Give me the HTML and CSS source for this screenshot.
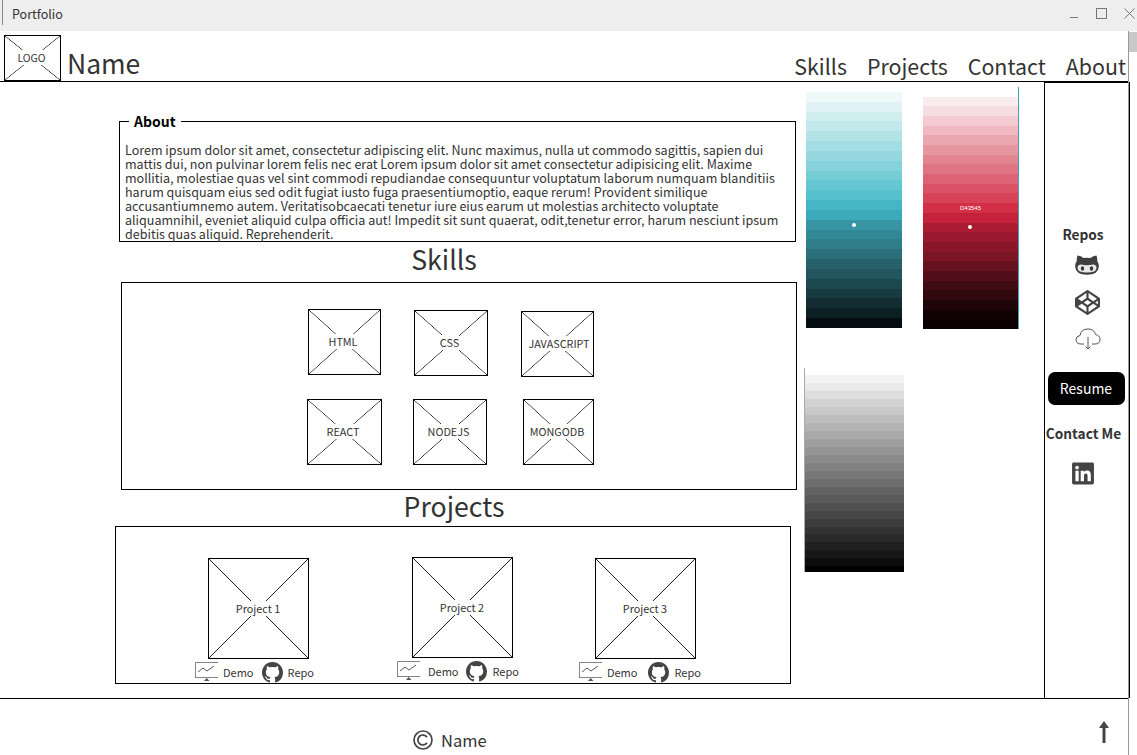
FILE: index.html
```html
<!DOCTYPE html>
<html>
<head>
    <meta charset="utf-8">
    <title>Portfolio</title>
    <link rel="stylesheet" href="styles.css">
</head>
<body>
    <div class="titlebar">
        <span class="window-title">Portfolio</span>
        <div class="window-controls">
            <svg width="9" height="9" viewBox="0 0 9 9"><path d="M0 8.5H8" stroke="#777" fill="none"/></svg>
            <svg width="11" height="11" viewBox="0 0 11 11"><rect x="0.5" y="0.5" width="10" height="10" stroke="#777" fill="none"/></svg>
            <svg width="11" height="11" viewBox="0 0 11 11"><path d="M0.5 0.5L10.5 10.5M10.5 0.5L0.5 10.5" stroke="#777" fill="none"/></svg>
        </div>
    </div>

    <div class="window">
        <div class="page">
            <header class="header">
                <div class="wire logo"><span>LOGO</span></div>
                <div class="name">Name</div>
                <nav class="nav">
                    <a>Skills</a>
                    <a>Projects</a>
                    <a>Contact</a>
                    <a>About</a>
                </nav>
            </header>

            <main class="main">
                <div class="content">
                    <fieldset class="about">
                        <legend>About</legend>
                        <p>Lorem ipsum dolor sit amet, consectetur adipiscing elit. Nunc maximus, nulla ut commodo sagittis, sapien dui<br>
                        mattis dui, non pulvinar lorem felis nec erat Lorem ipsum dolor sit amet consectetur adipisicing elit. Maxime<br>
                        mollitia, molestiae quas vel sint commodi repudiandae consequuntur voluptatum laborum numquam blanditiis<br>
                        harum quisquam eius sed odit fugiat iusto fuga praesentiumoptio, eaque rerum! Provident similique<br>
                        accusantiumnemo autem. Veritatisobcaecati tenetur iure eius earum ut molestias architecto voluptate<br>
                        aliquamnihil, eveniet aliquid culpa officia aut! Impedit sit sunt quaerat, odit,tenetur error, harum nesciunt ipsum<br>
                        debitis quas aliquid. Reprehenderit.</p>
                    </fieldset>

                    <h2 class="section-title skills-title">Skills</h2>
                    <section class="skills">
                        <div class="skill-row">
                            <div class="wire skill-html"><span>HTML</span></div>
                            <div class="wire skill-css"><span>CSS</span></div>
                            <div class="wire skill-js"><span>JAVASCRIPT</span></div>
                        </div>
                        <div class="skill-row skill-row-2">
                            <div class="wire skill-react"><span>REACT</span></div>
                            <div class="wire skill-node"><span>NODEJS</span></div>
                            <div class="wire skill-mongo"><span>MONGODB</span></div>
                        </div>
                    </section>

                    <h2 class="section-title projects-title">Projects</h2>
                    <section class="projects">
                        <div class="project project-1">
                            <div class="wire thumb"><span>Project 1</span></div>
                            <div class="project-links">
                                <svg class="demo-icon" viewBox="0 0 23 20"><use href="#monitor"/></svg>
                                <span class="demo-label">Demo</span>
                                <svg class="repo-icon" viewBox="0 0 16 16"><use href="#github"/></svg>
                                <span>Repo</span>
                            </div>
                        </div>
                        <div class="project project-2">
                            <div class="wire thumb"><span>Project 2</span></div>
                            <div class="project-links">
                                <svg class="demo-icon" viewBox="0 0 23 20"><use href="#monitor"/></svg>
                                <span class="demo-label">Demo</span>
                                <svg class="repo-icon" viewBox="0 0 16 16"><use href="#github"/></svg>
                                <span>Repo</span>
                            </div>
                        </div>
                        <div class="project project-3">
                            <div class="wire thumb"><span>Project 3</span></div>
                            <div class="project-links">
                                <svg class="demo-icon" viewBox="0 0 23 20"><use href="#monitor"/></svg>
                                <span class="demo-label">Demo</span>
                                <svg class="repo-icon" viewBox="0 0 16 16"><use href="#github"/></svg>
                                <span>Repo</span>
                            </div>
                        </div>
                    </section>
                </div>

                <div class="palettes">
                    <div class="palette-row">
                        <div class="palette teal"><i class="dot"></i></div>
                        <div class="palette crimson"><b class="hex">D43545</b><i class="dot"></i></div>
                    </div>
                    <div class="palette grey"></div>
                </div>

                <aside class="sidebar">
                    <h3>Repos</h3>
                    <svg class="side-cat" viewBox="0 0 24 20">
                        <path d="M2.500 0.500Q6 0.800 8.500 3Q12 2.300 15.500 3Q18 0.800 21.500 0.500Q22.500 3.500 22.300 6Q24 8.500 23.800 12Q23.300 19.700 12 19.700Q0.700 19.700 0.200 12Q0 8.500 1.700 6Q1.500 3.500 2.500 0.500Z" fill="#3f3f3f"/>
                        <path d="M6 9.500Q12 11 18 9.500Q21.500 9.500 21.500 13Q21.500 17.500 12 17.500Q2.500 17.500 2.500 13Q2.500 9.500 6 9.500Z" fill="#e8e8e8"/>
                        <ellipse cx="7.500" cy="13.500" rx="1.600" ry="2.200" fill="#333"/>
                        <ellipse cx="16.500" cy="13.500" rx="1.600" ry="2.200" fill="#333"/>
                    </svg>
                    <svg class="side-pen" viewBox="0 0 512 512"><path fill="#444" d="M502.285 159.704l-234-156c-7.987-4.915-16.511-4.96-24.571 0l-234 156C3.714 163.703 0 170.847 0 177.989v155.999c0 7.143 3.714 14.286 9.715 18.286l234 156.022c7.987 4.915 16.511 4.96 24.571 0l234-156.022c6-3.999 9.715-11.143 9.715-18.286V177.989c-.001-7.142-3.715-14.286-9.716-18.285zM278 63.131l172.286 114.858-76.857 51.429L278 165.703V63.131zm-44 0v102.572l-95.429 63.715-76.857-51.429L234 63.131zM44 219.132v73.715l55.143-36.857L44 219.132zm190 229.715L61.714 333.989l76.857-51.429L234 346.275v102.572zm22-140.858l-77.715-52 77.715-52 77.715 52-77.715 52zm22 140.858V346.275l95.429-63.715 76.857 51.429L278 448.847zm190-156l-55.143-36.857L468 219.132v73.715z"/></svg>
                    <svg class="side-cloud" viewBox="0 0 26 22"><path d="M9 16H6Q1 16 1 11.500Q1 8 5 7.500Q6 1 13 1Q19 1 20.500 6.500Q25 7.500 25 11.500Q25 16 20 16H17M13 9V21M10.500 18.500L13 21L15.500 18.500" fill="none" stroke="#555" stroke-width="1"/></svg>
                    <button class="resume">Resume</button>
                    <h3 class="contact-title">Contact Me</h3>
                    <svg class="side-linkedin" viewBox="0 0 448 512"><path fill="#444" d="M416 32H31.9C14.3 32 0 46.5 0 64.3v383.4C0 465.5 14.3 480 31.9 480H416c17.6 0 32-14.5 32-32.3V64.3c0-17.8-14.4-32.3-32-32.3zM135.4 416H69V202.2h66.5V416zm-33.2-243c-21.3 0-38.5-17.3-38.5-38.5S80.9 96 102.2 96c21.2 0 38.5 17.3 38.5 38.5 0 21.3-17.2 38.5-38.5 38.5zm282.1 243h-66.4V312c0-24.8-.5-56.7-34.5-56.7-34.6 0-39.9 27-39.9 54.9V416h-66.4V202.2h63.7v29.2h.9c8.9-16.8 30.6-34.5 62.9-34.5 67.2 0 79.7 44.3 79.7 101.9V416z"/></svg>
                </aside>
            </main>

            <footer class="footer">
                <div class="copyright">
                    <svg class="copy-icon" viewBox="0 0 20 20">
                        <circle cx="10" cy="10" r="9" fill="none" stroke="#444" stroke-width="1.700"/>
                        <path d="M14 7.200A5 5 0 1 0 14 12.800" fill="none" stroke="#444" stroke-width="1.700"/>
                    </svg>
                    <span>Name</span>
                </div>
                <svg class="to-top" viewBox="0 0 12 22"><path d="M6 0L11 7H7.500V22H4.500V7H1Z" fill="#444"/></svg>
            </footer>
        </div>
        <div class="scrollbar"><div class="scroll-thumb"></div></div>
    </div>

    <svg class="defs" width="0" height="0">
        <symbol id="monitor" viewBox="0 0 23 20">
            <path d="M0.500 16V0.500H23M0 15.500H23" fill="none" stroke="#666" stroke-width="0.800"/>
            <path d="M9 19H14.500L11.750 16Z" fill="#555"/>
            <path d="M3 10L8 6L12 9L19 4" fill="none" stroke="#444" stroke-width="0.900"/>
        </symbol>
        <symbol id="github" viewBox="0 0 16 16">
            <path fill="#444" d="M8 0C3.58 0 0 3.58 0 8c0 3.54 2.29 6.53 5.47 7.59.4.07.55-.17.55-.38 0-.19-.01-.82-.01-1.49-2.01.37-2.53-.49-2.69-.94-.09-.23-.48-.94-.82-1.13-.28-.15-.68-.52-.01-.53.63-.01 1.08.58 1.23.82.72 1.21 1.87.87 2.33.66.07-.52.28-.87.51-1.07-1.78-.2-3.64-.89-3.64-3.95 0-.87.31-1.59.82-2.15-.08-.2-.36-1.02.08-2.12 0 0 .67-.21 2.2.82.64-.18 1.32-.27 2-.27.68 0 1.36.09 2 .27 1.53-1.04 2.2-.82 2.2-.82.44 1.1.16 1.92.08 2.12.51.56.82 1.27.82 2.15 0 3.07-1.87 3.75-3.65 3.95.29.25.54.73.54 1.48 0 1.07-.01 1.93-.01 2.2 0 .21.15.46.55.38A8.013 8.013 0 0016 8c0-4.42-3.58-8-8-8z"/>
        </symbol>
    </svg>
</body>
</html>
```

FILE: styles.css
```css
* {
    box-sizing: border-box;
}

body {
    font-family: "Noto Sans CJK SC", "Noto Sans", sans-serif;
    color: #333;
    background-color: #FFF;
    margin: 0;
    width: 1137px;
    height: 755px;
    overflow: hidden;
}

.defs {
    display: block;
}

/* window chrome */
.titlebar {
    display: flex;
    align-items: center;
    justify-content: space-between;
    height: 31px;
    padding: 0 2px 4px 12px;
    background-color: #EEE;
    font-size: 12.5px;
    background-image: linear-gradient(#888, #888);
    background-repeat: no-repeat;
    background-size: 1px 25px;
    background-position: 2px 0;
}

.window-controls {
    display: flex;
    align-items: center;
    gap: 17px;
}

.window {
    display: flex;
    height: 724px;
}

.page {
    width: 1128px;
    flex: none;
}

.scrollbar {
    width: 9px;
    flex: none;
    border-left: 1px solid #999;
    padding-top: 1px;
}

.scroll-thumb {
    height: 20px;
    background-color: #C9C9C9;
}

/* the crossed box of the wireframe */
.wire {
    display: flex;
    align-items: center;
    justify-content: center;
    border: 1px solid #000;
    font-size: 10.8px;
    background:
        linear-gradient(to top right, transparent calc(50% - 0.6px), #222 50%, transparent calc(50% + 0.6px)),
        linear-gradient(to bottom right, transparent calc(50% - 0.6px), #222 50%, transparent calc(50% + 0.6px));
}

.wire span {
    background-color: #FFF;
    line-height: 15px;
    white-space: nowrap;
}

/* header */
.header {
    display: flex;
    align-items: flex-end;
    height: 51px;
    padding: 4px 2px 0 4px;
    border-bottom: 1px solid #000;
}

.logo {
    width: 57px;
    height: 46px;
    font-size: 10.500px;
}

.logo span {
    margin: 0 2px 1px 0;
}

.name {
    font-size: 26.500px;
    line-height: 36px;
    margin: 0 0 0 6px;
}

.nav {
    display: flex;
    gap: 20px;
    margin-left: auto;
    font-size: 21.400px;
    line-height: 30px;
}

/* main area */
.main {
    display: flex;
    height: 617px;
    border-bottom: 1px solid #000;
}

.content {
    width: 804px;
    flex: none;
}

.about {
    width: 677px;
    height: 130px;
    margin: 30px 0 0 119px;
    padding: 13px 5px 0;
    border: 1px solid #000;
    min-width: 0;
}

.about legend {
    margin-left: 4px;
    padding: 0 5px;
    font-size: 14px;
    font-weight: 700;
    line-height: 18px;
    color: #000;
}

.about p {
    margin: 0;
    font-size: 12.540px;
    line-height: 14px;
    white-space: nowrap;
}

.section-title {
    font-size: 26.700px;
    font-weight: 400;
    margin: 0;
    text-align: center;
}

.skills-title {
    width: 650px;
    margin-left: 119px;
    height: 40px;
    line-height: 33px;
}

.projects-title {
    width: 678px;
    margin-left: 115px;
    height: 36px;
    line-height: 31px;
}

.skills {
    width: 676px;
    height: 208px;
    margin-left: 121px;
    border: 1px solid #000;
    padding-top: 26px;
}

.skill-row {
    display: flex;
    align-items: flex-start;
    padding-left: 186px;
    height: 90px;
}

.skill-row-2 {
    padding-left: 185px;
}

.skill-row span {
    margin: 0 3px 2px 0;
}

.skill-row .skill-js span {
    margin: 0 0 2px 3px;
}

.skill-html { width: 73px; height: 66px; }
.skill-css { width: 74px; height: 66px; margin: 1px 0 0 33px; }
.skill-js { width: 73px; height: 66px; margin: 2px 0 0 33px; }
.skill-react { width: 75px; height: 66px; }
.skill-node { width: 74px; height: 66px; margin-left: 31px; }
.skill-mongo { width: 71px; height: 66px; margin-left: 36px; }

.projects {
    display: flex;
    align-items: flex-start;
    width: 676px;
    height: 158px;
    margin-left: 115px;
    border: 1px solid #000;
    padding: 31px 0 0 79px;
}

.project-2 { margin-left: 83px; margin-top: -1px; }
.project-3 { margin-left: 60px; }

.thumb {
    width: 101px;
    height: 101px;
}

.thumb span {
    margin: 0 1px 1px 0;
}

.project-1 .thumb { margin-left: 13px; }
.project-2 .thumb { margin-left: 15px; }
.project-3 .thumb { margin-left: 16px; }

.project-links {
    display: flex;
    align-items: center;
    height: 26px;
    font-size: 11px;
    white-space: nowrap;
}

.demo-icon {
    width: 23px;
    height: 20px;
}

.demo-label {
    margin: 0 8px 0 5px;
}

.project-2 .demo-label { margin-left: 8px; }
.project-3 .demo-label { margin-right: 11px; }

.repo-icon {
    width: 21px;
    height: 21px;
    margin-right: 5px;
}

/* palettes */
.palettes {
    width: 240px;
    flex: none;
}

.palette-row {
    display: flex;
    align-items: flex-start;
}

.palette {
    position: relative;
}

.dot {
    position: absolute;
    width: 4px;
    height: 4px;
    border-radius: 50%;
    background-color: #FFF;
}

.teal {
    width: 96px;
    height: 236px;
    margin: 10px 0 0 2px;
    background: linear-gradient(#eef8f9 0 4.17%, #e0f2f5 0 8.33%, #d0edf0 0 12.5%, #c1e8eb 0 16.67%, #b3e2e7 0 20.83%, #a4dde3 0 25%, #95d8df 0 29.17%, #85d2da 0 33.33%, #75cdd6 0 37.5%, #65c7d2 0 41.67%, #55c1cd 0 45.83%, #46b6c7 0 50%, #3caaba 0 54.17%, #3694a3 0 58.33%, #338896 0 62.5%, #2f7d89 0 66.67%, #2b6f7a 0 70.83%, #27626c 0 75%, #22555e 0 79.17%, #1d4850 0 83.33%, #183b42 0 87.5%, #132d33 0 91.67%, #0c1f23 0 95.83%, #060d10 0 100%);
}

.teal .dot {
    left: 46px;
    top: 131px;
}

.crimson {
    width: 96px;
    height: 242px;
    margin: 5px 0 0 21px;
    border-right: 1px solid #3FA7B5;
    background: linear-gradient(#fff 0 4%, #faecee 0 8%, #f6dde1 0 12%, #f3cbd0 0 16%, #f0b9c0 0 20%, #eaa7b0 0 24%, #e696a1 0 28%, #e28591 0 32%, #df7482 0 36%, #dc6374 0 40%, #da5266 0 44%, #d94359 0 48%, #d22f47 0 52%, #c4213c 0 56%, #ab1c33 0 60%, #9b192e 0 64%, #8a1729 0 68%, #791524 0 72%, #66111e 0 76%, #530e19 0 80%, #410b13 0 84%, #30080e 0 88%, #200508 0 92%, #120203 0 96%, #0a0001 0 100%);
}

.crimson .dot {
    left: 45px;
    top: 138px;
}

.hex {
    position: absolute;
    left: 0;
    right: 0;
    top: 116px;
    font-family: "Liberation Sans", sans-serif;
    font-size: 6px;
    font-weight: 400;
    line-height: 10px;
    text-align: center;
    color: #FFF;
}

.grey {
    width: 100px;
    height: 204px;
    margin: 39px 0 0 0;
    border-left: 1px solid #AAA;
    background: linear-gradient(#fff 0 3.5%, #f3f3f3 0 7.5%, #e9e9e9 0 11.4%, #dedede 0 15.3%, #d2d2d2 0 19.2%, #c8c8c8 0 23.1%, #bdbdbd 0 27%, #b3b3b3 0 30.9%, #a9a9a9 0 34.8%, #9f9f9f 0 38.7%, #959595 0 42.6%, #8b8b8b 0 46.5%, #818181 0 50.4%, #777 0 54.3%, #6d6d6d 0 58.2%, #636363 0 62.1%, #5a5a5a 0 66%, #505050 0 69.9%, #474747 0 73.8%, #3d3d3d 0 77.7%, #333 0 81.6%, #2a2a2a 0 85.5%, #202020 0 89.4%, #171717 0 93.3%, #0d0d0d 0 97.2%, #000 0 100%);
}

/* right sidebar */
.sidebar {
    display: flex;
    flex-direction: column;
    align-items: center;
    flex: none;
    width: 86px;
    height: 616px;
    border: 1px solid #000;
    border-right-width: 2px;
    border-bottom: 0;
    padding-top: 1px;
    color: #333;
}

.sidebar h3 {
    margin: 0;
    font-size: 13.700px;
    font-weight: 700;
    line-height: 18px;
}

.sidebar h3:first-child {
    margin: 141px 0 0 -7px;
}

.side-cat {
    width: 24px;
    height: 20px;
    margin-top: 12px;
    margin-left: 1px;
}

.side-pen {
    width: 25px;
    height: 25px;
    margin-top: 15px;
    margin-left: 1px;
}

.side-cloud {
    width: 26px;
    height: 22px;
    margin-top: 13px;
    margin-left: 2px;
}

.resume {
    width: 77px;
    height: 33px;
    margin-top: 22px;
    margin-left: -1px;
    padding: 0 0 2px;
    font: inherit;
    font-size: 14px;
    color: #FFF;
    background-color: #000;
    border: none;
    border-radius: 7px;
}

.sidebar h3.contact-title {
    margin-top: 19px;
    margin-left: -6px;
    white-space: nowrap;
}

.side-linkedin {
    width: 22px;
    height: 25px;
    margin-top: 19px;
    margin-left: -7px;
}

/* footer */
.footer {
    display: flex;
    align-items: flex-start;
    justify-content: space-between;
    height: 56px;
    padding: 22px 18px 0 413px;
}

.copyright {
    display: flex;
    align-items: center;
    gap: 8px;
    height: 38px;
    font-size: 16.500px;
}

.copy-icon {
    width: 20px;
    height: 20px;
}

.to-top {
    width: 12px;
    height: 22px;
}
```
